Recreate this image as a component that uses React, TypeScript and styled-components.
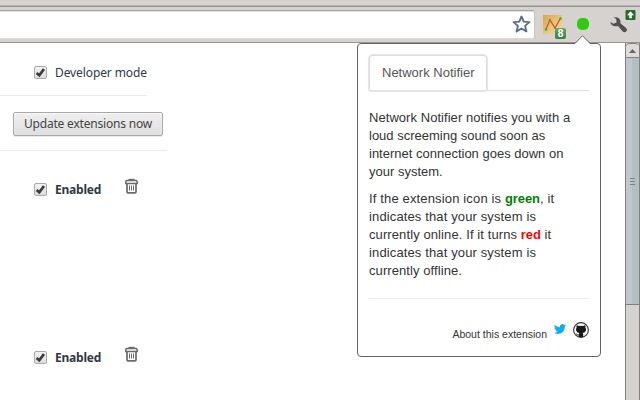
import React from "react";
import styled, { createGlobalStyle } from "styled-components";

const GlobalStyle = createGlobalStyle`
  * { box-sizing: border-box; }
  html, body { margin: 0; padding: 0; overflow: hidden; background: #fff; }
`;

const Browser = styled.div`
  position: relative;
  width: 640px;
  height: 400px;
  display: flex;
  flex-direction: column;
  overflow: hidden;
  background: #fff;
  font-family: "Noto Sans", "Open Sans", sans-serif;
`;

const TabStrip = styled.div`
  flex: none;
  height: 7px;
  background: #d6d2d0;
  border-bottom: 1px solid #989390;
  box-shadow: inset 0 -1px 0 #b9b4b1;
`;

const Toolbar = styled.header`
  flex: none;
  height: 36px;
  display: flex;
  align-items: flex-start;
  padding-top: 3px;
  background: #d6d2d0;
  border-bottom: 1px solid #999492;
`;

const Omnibox = styled.div`
  width: 535px;
  height: 29px;
  display: flex;
  justify-content: flex-end;
  padding: 3px 3px 0 0;
  background: #fff;
  border: solid #a5a1a0;
  border-width: 1px 1px 1px 0;
  border-right-color: #c9c5c3;
  border-bottom-color: #dedbda;
  border-radius: 0 3px 3px 0;
  box-shadow: inset 0 1px 0 #e6e4e3;
`;

const Actions = styled.div`
  flex: 1;
  display: flex;
  align-items: flex-start;
`;

const ChartAction = styled.svg`
  margin: 5px 0 0 8px;
`;

const StatusDot = styled.span`
  width: 12px;
  height: 12px;
  margin: 8px 0 0 10px;
  border-radius: 5px;
  background: #2fcb10;
`;

const WrenchAction = styled.svg`
  margin: -1px 0 0 21px;
`;

const Viewport = styled.div`
  flex: 1;
  display: flex;
  min-height: 0;
`;

const Page = styled.main`
  flex: 1;
  display: flex;
  flex-direction: column;
  align-items: flex-start;
  overflow: hidden;
`;

const Section = styled.section<{ $width: number; $height: number; $left: number; $top: number }>`
  flex: none;
  width: ${(p) => p.$width}px;
  height: ${(p) => p.$height}px;
  padding: ${(p) => p.$top}px 0 0 ${(p) => p.$left}px;
  border-bottom: 1px solid #eaeaea;
`;

const ExtensionList = styled.div`
  flex: none;
  padding: 28px 0 0 34px;
`;

const ExtensionRow = styled.div`
  display: flex;
  align-items: flex-start;
  height: 168px;
`;

const CheckRow = styled.div`
  display: flex;
  align-items: center;
  height: 20px;
`;

const CheckBox = styled.span`
  width: 13px;
  height: 13px;
  margin-right: 8px;
  display: flex;
  border: 1px solid #aaa;
  border-radius: 2px;
  background: linear-gradient(#f2f2f2, #dedede);
`;

const Label = styled.span<{ $strong?: boolean }>`
  padding-top: 2px;
  font-size: 12px;
  line-height: 18px;
  white-space: nowrap;
  color: #303942;
  font-weight: ${(p) => (p.$strong ? 700 : 400)};
  letter-spacing: ${(p) => (p.$strong ? "-0.22px" : "-0.1px")};
`;

const Trash = styled.svg`
  flex: none;
  margin: -1px 0 0 24px;
`;

const Button = styled.button`
  width: 150px;
  height: 24px;
  padding: 0;
  border: 1px solid #a8a8a8;
  border-radius: 2px;
  background: linear-gradient(#eeeeee, #e9e9e9 40%, #dedede);
  box-shadow: 0 1px 0 rgba(0, 0, 0, 0.08), inset 0 1px 2px rgba(255, 255, 255, 0.75);
  color: #444;
  font-family: inherit;
  font-size: 12px;
  letter-spacing: -0.19px;
  line-height: 22px;
  white-space: nowrap;
`;

const Scrollbar = styled.div`
  width: 15px;
  display: flex;
  flex-direction: column;
  background: #d6d2d0;
  border: solid #85807e;
  border-width: 0 1px;
`;

const ScrollUp = styled.div`
  height: 15px;
  display: flex;
  justify-content: center;
  padding-top: 5px;
  background: #dedbd9;
  border: 1px solid #85807e;
  border-width: 1px 0;
  border-radius: 4px 4px 0 0;
`;

const ScrollThumb = styled.div`
  height: 247px;
  display: flex;
  flex-direction: column;
  align-items: center;
  justify-content: center;
  gap: 2px;
  border-bottom: 1px solid #7f7f7f;
  background: linear-gradient(90deg, #bfc9cb 0 50%, #b4bfc1 50%);
`;

const Grip = styled.i`
  width: 5px;
  height: 1px;
  background: #7c8183;
`;

const Popup = styled.aside`
  position: absolute;
  left: 357px;
  top: 43px;
  width: 244px;
  height: 314px;
  padding: 11px 11px 0;
  background: #fff;
  border: 1px solid #636363;
  border-radius: 4px;
  font-family: "Liberation Sans", Arial, sans-serif;
  color: #333;
`;

const Arrow = styled.svg`
  position: absolute;
  left: 215px;
  top: -10px;
`;

const TabBar = styled.nav`
  display: flex;
  height: 36px;
  border-bottom: 1px solid #ddd;
`;

const Tab = styled.span`
  width: 118px;
  height: 36px;
  padding-left: 12px;
  font-size: 13px;
  line-height: 34px;
  color: #555;
  background: #fff;
  border: 1px solid #ddd;
  border-bottom-color: #e2e2e2;
  border-radius: 4px 4px 2px 2px;
  box-shadow: 0 0 1px 1px #e4e4e4;
  white-space: nowrap;
`;

const Description = styled.div`
  padding-top: 18px;
`;

const Paragraph = styled.p`
  margin: 0 0 9px;
  font-size: 13px;
  line-height: 18px;
  white-space: nowrap;
`;

const Line = styled.span<{ $tracking?: number }>`
  display: block;
  letter-spacing: ${(p) => p.$tracking ?? 0}px;
`;

const Status = styled.b<{ $color: string }>`
  color: ${(p) => p.$color};
  letter-spacing: -0.1px;
`;

const Footer = styled.footer`
  display: flex;
  justify-content: flex-end;
  align-items: flex-start;
  margin-top: 18px;
  padding-top: 23px;
  border-top: 1px solid #eee;
`;

const About = styled.span`
  margin: 4px 7px 0 0;
  font-size: 10.5px;
  line-height: 16px;
  white-space: nowrap;
`;

const Twitter = styled.svg`
  margin: 2px 7px 0 0;
`;

const Check = () => (
  <svg width="11" height="11" viewBox="0 0 11 11">
    <path d="M1.600 6 L4.300 8.300 L9 2" fill="none" stroke="#3c3c3c" strokeWidth="2.700" />
  </svg>
);

const TrashIcon = () => (
  <Trash width="14" height="16" viewBox="0 0 14 16" fill="none" stroke="#6a6a6a">
    <path d="M3.500 1.500h6" strokeWidth="1.300" />
    <path d="M.8 5.500V3.700q0-1.100 1.100-1.100h9.200q1.100 0 1.100 1.100v1.800z" fill="#fff" strokeWidth="1.500" />
    <path d="M2 5.500v8.300q0 1 1 1h7q1 0 1-1V5.500" strokeWidth="1.700" />
    <path d="M4.500 7.500v5M6.500 7.500v5M8.500 7.500v5" strokeWidth="1" />
  </Trash>
);

const Extension = () => (
  <ExtensionRow>
    <CheckRow>
      <CheckBox><Check /></CheckBox>
      <Label $strong>Enabled</Label>
    </CheckRow>
    <TrashIcon />
  </ExtensionRow>
);

export default function App() {
  return (
    <>
      <GlobalStyle />
      <Browser>
        <TabStrip />
        <Toolbar>
          <Omnibox>
            <svg width="20" height="20" viewBox="0 0 20 20">
              <path
                d="M10.500 2.500l2.200 5.100 5.700.5-4.300 3.800 1.300 5.500-4.900-2.900-4.900 2.900 1.300-5.500-4.300-3.800 5.700-.5z"
                fill="#fff" stroke="#5d6c8b" strokeWidth="1.900" strokeLinejoin="round"
              />
            </svg>
          </Omnibox>
          <Actions>
            <ChartAction width="24" height="25" viewBox="0 0 24 25">
              <defs>
                <linearGradient id="sand" x1="0" y1="0" x2="1" y2="1">
                  <stop offset="0" stopColor="#d9a54b" />
                  <stop offset="1" stopColor="#f4dfaa" />
                </linearGradient>
                <linearGradient id="leaf" x1="0" y1="0" x2="0" y2="1">
                  <stop offset="0" stopColor="#71a374" />
                  <stop offset="1" stopColor="#32803a" />
                </linearGradient>
              </defs>
              <rect width="19" height="19" fill="url(#sand)" />
              <path d="M3 14L7 5l5 8 5-9" fill="none" stroke="#c9501f" strokeWidth="1.200" />
              <g fill="#4fa52b">
                <circle cx="3" cy="14.500" r="1.200" />
                <circle cx="7" cy="5" r="1" />
                <circle cx="12" cy="13" r="1.100" />
                <circle cx="17.500" cy="3.500" r="1.200" />
              </g>
              <rect x="12" y="13" width="11" height="11" rx="2" fill="url(#leaf)" />
              <text x="17.500" y="22" textAnchor="middle" fontFamily="Liberation Sans" fontSize="10" fontWeight="700" fill="#fff">8</text>
            </ChartAction>
            <StatusDot />
            <WrenchAction width="28" height="26" viewBox="0 0 28 26">
              <path
                d="M-.2 11.200L3.200 13 6 11.500 5.400 8.200 2.800 7.200Q6.200 6 8.500 8.200q1.600 1.800 1 4.200l5.200 4.300q2 1.800.4 3.600-1.800 1.600-3.600-.2L7.300 15Q1.400 16.600-.2 11.200z"
                transform="translate(.4 1.200) scale(1.050)" fill="#505050"
              />
              <rect x="15.500" y="1" width="10" height="10" rx="1" fill="#276b27" />
              <path d="M20.500 2.300l3.500 3.900h-2.200V9.300h-2.600V6.200H17z" fill="#fff" />
            </WrenchAction>
          </Actions>
        </Toolbar>
        <Viewport>
          <Page>
            <Section $width={147} $height={53} $left={34} $top={19}>
              <CheckRow>
                <CheckBox><Check /></CheckBox>
                <Label>Developer mode</Label>
              </CheckRow>
            </Section>
            <Section $width={167} $height={55} $left={13} $top={15}>
              <Button>Update extensions now</Button>
            </Section>
            <ExtensionList>
              <Extension />
              <Extension />
            </ExtensionList>
          </Page>
          <Scrollbar>
            <ScrollUp>
              <svg width="7" height="4" viewBox="0 0 7 4"><path d="M3.500 0L7 4H0z" fill="#666" /></svg>
            </ScrollUp>
            <ScrollThumb><Grip /><Grip /><Grip /></ScrollThumb>
          </Scrollbar>
        </Viewport>
        <Popup>
          <Arrow width="20" height="11" viewBox="0 0 20 11">
            <path d="M1 11V9.500h1L9.500 1.500 17 9.500h1V11z" fill="#fff" />
            <path d="M1 9.500h1L9.500 1.700l7.500 7.800H18" fill="none" stroke="#636363" />
          </Arrow>
          <TabBar><Tab>Network Notifier</Tab></TabBar>
          <Description>
            <Paragraph>
              <Line $tracking={0.05}>Network Notifier notifies you with a</Line>
              <Line>loud screeming sound soon as</Line>
              <Line>internet connection goes down on</Line>
              <Line>your system.</Line>
            </Paragraph>
            <Paragraph>
              <Line $tracking={0.15}>If the extension icon is <Status $color="green">green</Status>, it</Line>
              <Line $tracking={0.13}>indicates that your system is</Line>
              <Line $tracking={0.1}>currently online. If it turns <Status $color="red">red</Status> it</Line>
              <Line $tracking={0.13}>indicates that your system is</Line>
              <Line $tracking={0.08}>currently offline.</Line>
            </Paragraph>
          </Description>
          <Footer>
            <About>About this extension</About>
            <Twitter width="12" height="10" viewBox="0 1.900 24 20">
              <path
                fill="#12aee9"
                d="M23.950 4.570a10 10 0 0 1-2.820.77 4.960 4.960 0 0 0 2.160-2.720c-.95.550-2 .950-3.130 1.180a4.920 4.920 0 0 0-8.380 4.480C7.690 8.090 4.070 6.130 1.640 3.160a4.820 4.820 0 0 0-.67 2.480c0 1.710.87 3.210 2.190 4.100a4.900 4.900 0 0 1-2.230-.62v.06a4.920 4.920 0 0 0 3.950 4.830 5 5 0 0 1-2.210.08 4.940 4.940 0 0 0 4.600 3.420A9.870 9.870 0 0 1 0 19.540a13.990 13.990 0 0 0 7.560 2.210c9.050 0 14-7.500 14-13.980 0-.21 0-.42-.02-.63A9.940 9.940 0 0 0 24 4.590z"
              />
            </Twitter>
            <svg width="16" height="16" viewBox="0.500 0.500 16 16">
              <circle cx="8.500" cy="8.500" r="7.400" fill="#fff" stroke="#333" strokeWidth="1.100" />
              <path
                fill="#181818"
                d="M4.200 3.700Q5.300 3.700 6.400 4.500q2.100-.4 4.200 0Q11.700 3.700 12.800 3.700q.5 1.100.1 2.200 1 1.300.5 3-.5 2.200-3.200 2.600.5.600.5 1.500v2.600H6.300v-1.700q-1.800.2-2.400-.8-.4-.8-1-1 1.200-.3 1.800.6.500.7 1.600.3 0-.9.500-1.500-2.700-.4-3.200-2.600-.4-1.700.5-3-.4-1.100.1-2.200z"
              />
            </svg>
          </Footer>
        </Popup>
      </Browser>
    </>
  );
}
